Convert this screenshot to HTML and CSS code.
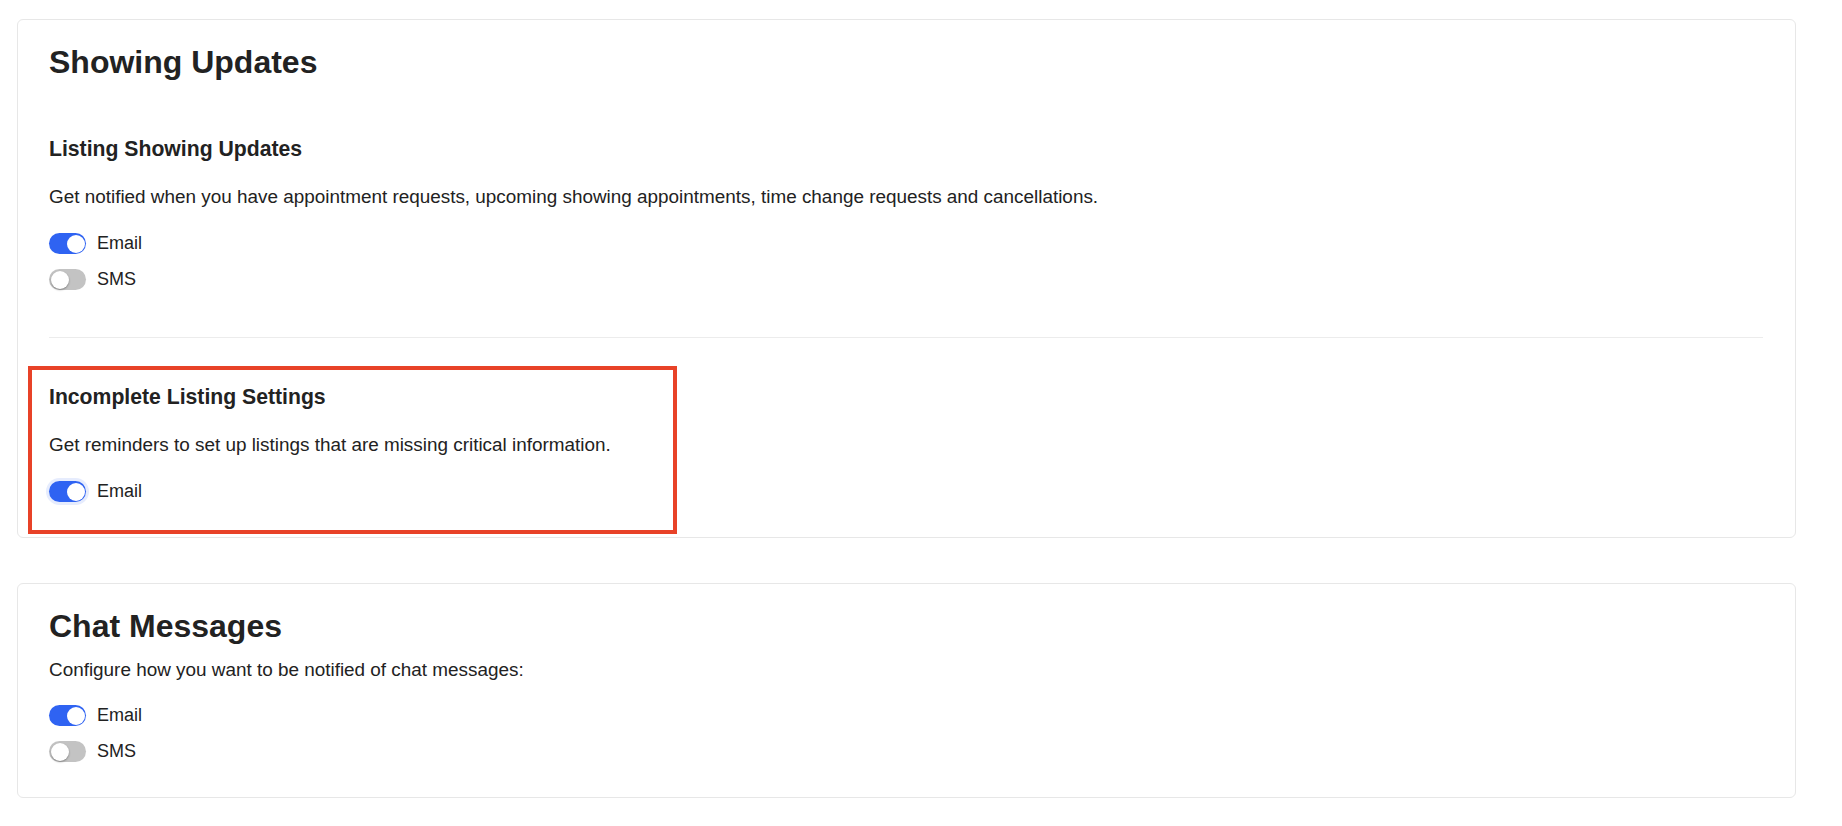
FILE: index.html
```html
<!DOCTYPE html>
<html lang="en">
<head>
<meta charset="utf-8">
<title>Notification Settings</title>
<link rel="stylesheet" href="styles.css">
</head>
<body>
<main class="page">
  <section class="card">
    <h2 class="card-title">Showing Updates</h2>
    <div class="group group-first">
      <h3 class="group-title">Listing Showing Updates</h3>
      <p class="group-desc">Get notified when you have appointment requests, upcoming showing appointments, time change requests and cancellations.</p>
      <div class="toggles">
        <div class="toggle-row"><span class="toggle on" role="switch" aria-checked="true"><span class="knob"></span></span><span class="toggle-label">Email</span></div>
        <div class="toggle-row"><span class="toggle" role="switch" aria-checked="false"><span class="knob"></span></span><span class="toggle-label">SMS</span></div>
      </div>
    </div>
    <hr class="divider">
    <div class="group group-highlight">
      <h3 class="group-title">Incomplete Listing Settings</h3>
      <p class="group-desc">Get reminders to set up listings that are missing critical information.</p>
      <div class="toggles">
        <div class="toggle-row"><span class="toggle on focus" role="switch" aria-checked="true"><span class="knob"></span></span><span class="toggle-label">Email</span></div>
      </div>
    </div>
  </section>

  <section class="card">
    <h2 class="card-title">Chat Messages</h2>
    <p class="card-desc">Configure how you want to be notified of chat messages:</p>
    <div class="toggles toggles-tight">
      <div class="toggle-row"><span class="toggle on" role="switch" aria-checked="true"><span class="knob"></span></span><span class="toggle-label">Email</span></div>
      <div class="toggle-row"><span class="toggle" role="switch" aria-checked="false"><span class="knob"></span></span><span class="toggle-label">SMS</span></div>
    </div>
  </section>
</main>
</body>
</html>
```

FILE: styles.css
```css
* { box-sizing: border-box; }

body {
  margin: 0;
  background: #ffffff;
  color: #222222;
  font-family: "Liberation Sans", Arial, Helvetica, sans-serif;
}

.page {
  display: flex;
  flex-direction: column;
  gap: 45px;
  padding: 19px 46px 20px 17px;
}

.card {
  border: 1px solid #e7e7e7;
  border-radius: 6px;
  padding: 23px 32px 35px 31px;
  background: #ffffff;
}

.card-title {
  margin: 0;
  font-size: 32px;
  line-height: 38px;
  font-weight: 700;
  color: #222222;
}

.group-first {
  padding: 55px 0 47px;
}

.group-title {
  margin: 0;
  font-size: 21.2px;
  line-height: 25px;
  font-weight: 700;
  color: #222222;
}

.group-desc,
.card-desc {
  margin: 25px 0 0;
  font-size: 18.9px;
  line-height: 22px;
  color: #222222;
}

.card-desc {
  margin-top: 14px;
}

.divider {
  margin: 0;
  border: 0;
  border-top: 1px solid #ececec;
  height: 0;
}

.group-highlight {
  width: 649px;
  margin: 28px 0 -32px -21px;
  padding: 14px 0 28px 17px;
  border: 4px solid #e84228;
}

.toggles {
  display: flex;
  flex-direction: column;
  gap: 15px;
  margin-top: 25px;
}

.toggles-tight {
  margin-top: 24px;
}

.toggle-row {
  display: flex;
  align-items: center;
  gap: 11px;
  height: 21px;
}

.toggle {
  flex: none;
  display: flex;
  align-items: center;
  justify-content: flex-start;
  width: 37px;
  height: 21px;
  padding: 0 1.5px;
  border-radius: 11px;
  background: #c3c3c3;
}

.toggle.on {
  justify-content: flex-end;
  background: #2f63f2;
}

.toggle.focus {
  box-shadow: 0 0 0 3px rgba(47, 99, 242, 0.12);
}

.knob {
  width: 18px;
  height: 18px;
  border-radius: 50%;
  background: #ffffff;
  box-shadow: 0 1px 2px rgba(0, 0, 0, 0.35);
}

.toggle.on .knob {
  box-shadow: none;
}

.toggle-label {
  font-size: 18px;
  line-height: 21px;
  color: #222222;
}
```
